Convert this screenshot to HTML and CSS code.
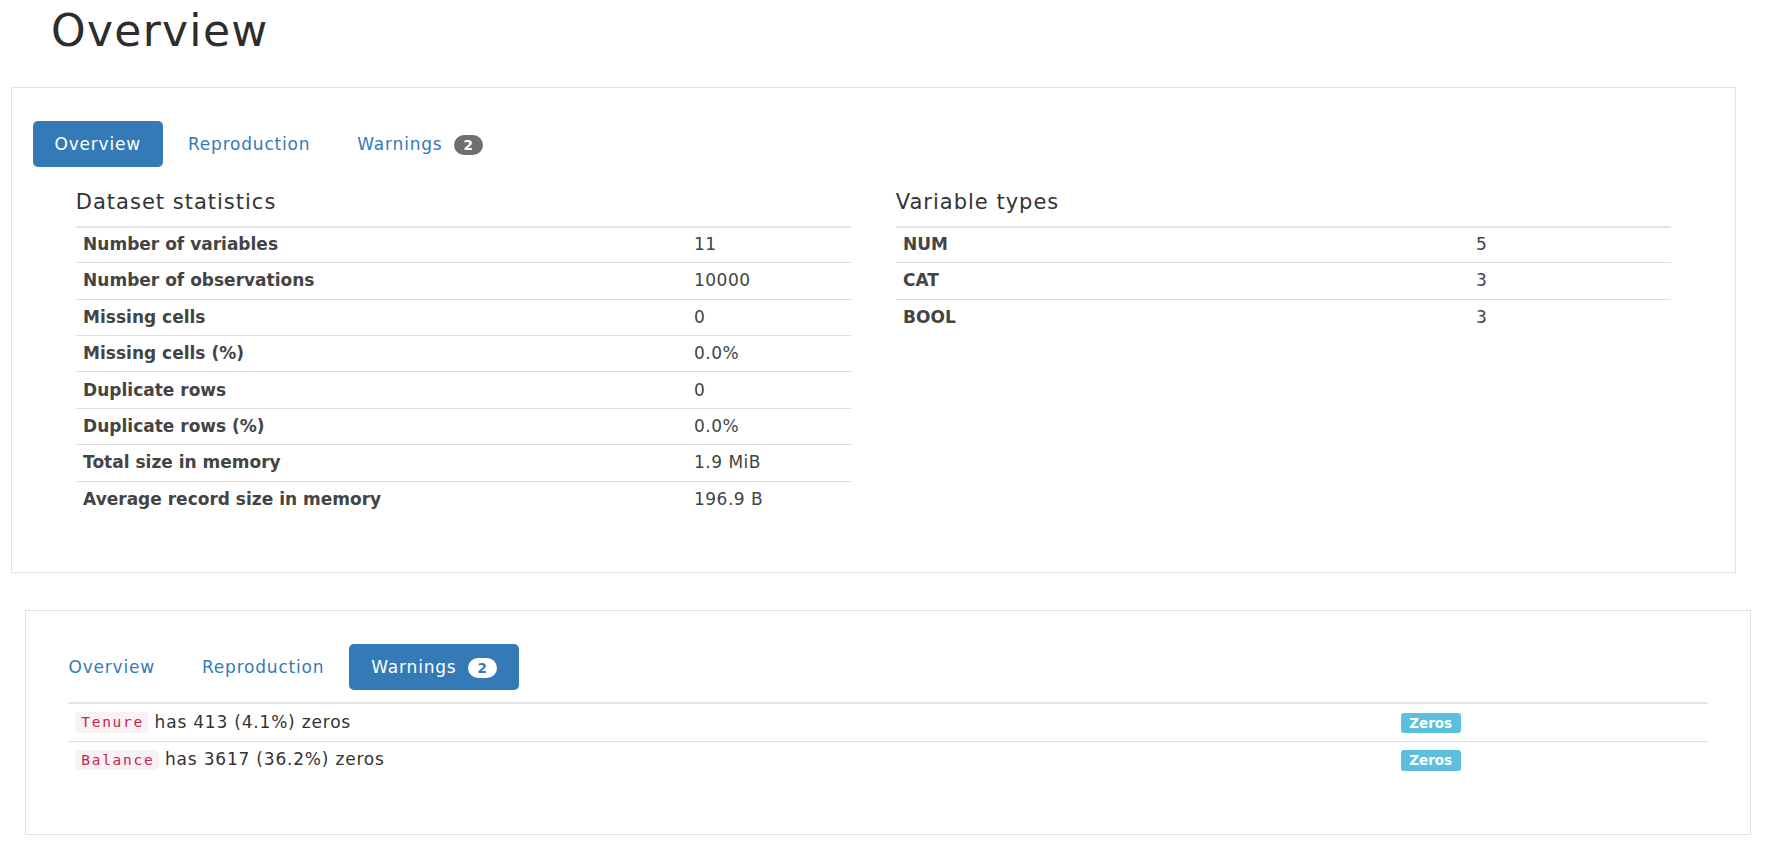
FILE: index.html
```html
<!DOCTYPE html>
<html lang="en">
<head>
<meta charset="utf-8">
<title>Overview</title>
<link rel="stylesheet" href="styles.css">
</head>
<body>
<h1 class="page-title">Overview</h1>

<section class="panel panel-top">
  <ul class="pills">
    <li class="pill active"><a>Overview</a></li>
    <li class="pill"><a>Reproduction</a></li>
    <li class="pill"><a>Warnings<span class="badge">2</span></a></li>
  </ul>
  <div class="cols">
    <div class="col">
      <h4 class="sub">Dataset statistics</h4>
      <table class="stats">
        <tbody>
          <tr><th>Number of variables</th><td class="val val-left">11</td></tr>
          <tr><th>Number of observations</th><td class="val val-left">10000</td></tr>
          <tr><th>Missing cells</th><td class="val val-left">0</td></tr>
          <tr><th>Missing cells (%)</th><td class="val val-left">0.0%</td></tr>
          <tr><th>Duplicate rows</th><td class="val val-left">0</td></tr>
          <tr><th>Duplicate rows (%)</th><td class="val val-left">0.0%</td></tr>
          <tr><th>Total size in memory</th><td class="val val-left">1.9 MiB</td></tr>
          <tr><th>Average record size in memory</th><td class="val val-left">196.9 B</td></tr>
        </tbody>
      </table>
    </div>
    <div class="col">
      <h4 class="sub">Variable types</h4>
      <table class="stats">
        <tbody>
          <tr><th>NUM</th><td class="val val-right">5</td></tr>
          <tr><th>CAT</th><td class="val val-right">3</td></tr>
          <tr><th>BOOL</th><td class="val val-right">3</td></tr>
        </tbody>
      </table>
    </div>
  </div>
</section>

<section class="panel panel-bottom">
  <ul class="pills">
    <li class="pill"><a>Overview</a></li>
    <li class="pill"><a>Reproduction</a></li>
    <li class="pill active"><a>Warnings<span class="badge">2</span></a></li>
  </ul>
  <table class="warnings">
    <tbody>
      <tr><td><code>Tenure</code> has 413 (4.1%) zeros</td><td class="tag-cell"><span class="label">Zeros</span></td></tr>
      <tr><td><code>Balance</code> has 3617 (36.2%) zeros</td><td class="tag-cell"><span class="label">Zeros</span></td></tr>
    </tbody>
  </table>
</section>
</body>
</html>
```

FILE: styles.css
```css
html, body {
  margin: 0;
  padding: 0;
  background: #ffffff;
}

body {
  font-family: "DejaVu Sans", "Liberation Sans", sans-serif;
  font-size: 17px;
  color: #333333;
}

.page-title {
  margin: 7.5px 0 0 51px;
  font-size: 44px;
  line-height: 46px;
  font-weight: normal;
  letter-spacing: 1.3px;
  color: #2d2d2d;
}

.panel {
  border: 1px solid #e2e2e6;
  padding: 33px 20.5px 0;
}

.panel-top {
  margin: 33.5px 35px 0 11px;
  padding-bottom: 55px;
}

.panel-bottom {
  margin: 37px 20px 0 25px;
  padding-bottom: 56px;
}

/* pills */
.pills {
  list-style: none;
  margin: 0;
  padding: 0;
  display: flex;
  gap: 3px;
}

.pill a {
  display: block;
  padding: 11px 22px;
  line-height: 24px;
  border-radius: 5px;
  color: #337ab7;
  letter-spacing: 0.8px;
}

.pill.active a {
  background: #337ab7;
  color: #ffffff;
}

.badge {
  display: inline-block;
  margin-left: 11px;
  padding: 0 10px;
  font-size: 13.5px;
  line-height: 20px;
  font-weight: bold;
  letter-spacing: 0;
  color: #ffffff;
  background: #6f6f6f;
  border-radius: 10px;
}

.pill.active .badge {
  background: #ffffff;
  color: #337ab7;
}

/* columns */
.cols {
  display: grid;
  grid-template-columns: 1fr 1fr;
  column-gap: 44.5px;
  margin: 0 43.3px;
  align-items: start;
}

.sub {
  margin: 22.5px 0 11.2px;
  font-size: 21px;
  line-height: 25px;
  font-weight: normal;
  letter-spacing: 1px;
  color: #333333;
}

/* tables */
.stats,
.warnings {
  width: 100%;
  border-collapse: collapse;
  border-spacing: 0;
}

.stats th,
.stats td,
.warnings td {
  padding: 6.2px 7.3px;
  line-height: 23px;
  border-top: 1px solid #dedede;
  text-align: left;
  vertical-align: top;
}

.stats tr:first-child th,
.stats tr:first-child td,
.warnings tr:first-child td {
  border-top: 2px solid #e4e4e4;
  padding-top: 5.4px;
}

.stats th {
  font-weight: bold;
  letter-spacing: 0;
  color: #444444;
}

.stats td {
  letter-spacing: 0.5px;
  color: #444444;
}

.warnings td {
  letter-spacing: 0.8px;
  color: #333333;
}

.val-left {
  width: 150px;
}

.val-right {
  width: 188px;
}

.warnings {
  margin: 12.6px 0 0;
  width: calc(100% - 43px);
  margin-left: 21.5px;
}

.warnings tr:first-child td {
  padding-top: 6.2px;
}

.tag-cell {
  width: 300px;
}

code {
  font-family: "DejaVu Sans Mono", "Liberation Mono", monospace;
  font-size: 14.5px;
  letter-spacing: 1.7px;
  padding: 2.4px 4.5px 2.4px 6px;
  color: #c7254e;
  background: #f9f2f4;
  border-radius: 4px;
}

.label {
  display: inline-block;
  padding: 0 8.5px;
  font-size: 13.5px;
  line-height: 20.5px;
  font-weight: bold;
  letter-spacing: 0;
  color: #ffffff;
  background: #5bc0de;
  border-radius: 3px;
}
```
